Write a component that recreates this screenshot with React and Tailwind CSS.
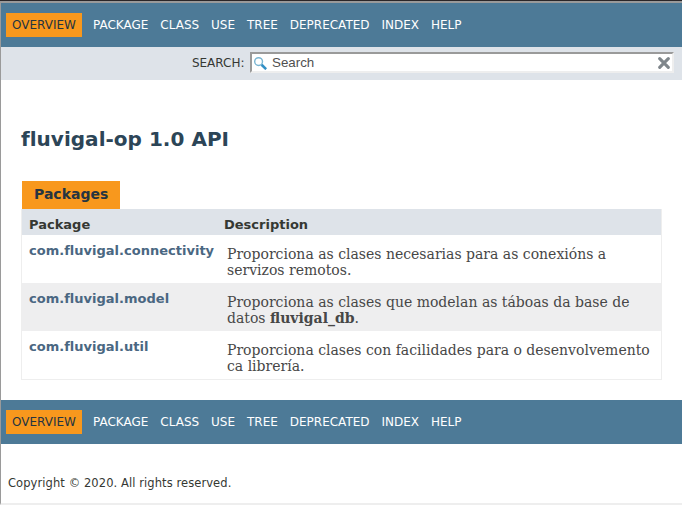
const navItems = ["PACKAGE", "CLASS", "USE", "TREE", "DEPRECATED", "INDEX", "HELP"];

const packages = [
  {
    name: "com.fluvigal.connectivity",
    description: (
      <>
        Proporciona as clases necesarias para as conexións a<br />
        servizos remotos.
      </>
    ),
  },
  {
    name: "com.fluvigal.model",
    description: (
      <>
        Proporciona as clases que modelan as táboas da base de<br />
        datos <b>fluvigal_db</b>.
      </>
    ),
  },
  {
    name: "com.fluvigal.util",
    description: (
      <>
        Proporciona clases con facilidades para o desenvolvemento<br />
        ca librería.
      </>
    ),
  },
];

function NavBar() {
  return (
    <nav className="flex h-11 shrink-0 items-center bg-[#4d7a97] pl-[5px] text-[12px] leading-[14px] text-white">
      <span className="mr-[11px] flex h-6 w-[76px] items-center bg-[#f8981d] pl-1.5 text-[#253441]">OVERVIEW</span>
      <ul className="flex gap-[11.95px]">
        {navItems.map((item) => (
          <li key={item}>{item}</li>
        ))}
      </ul>
    </nav>
  );
}

function SearchBar() {
  return (
    <div className="flex h-[33px] shrink-0 items-start justify-end bg-[#dee3e9] pt-[5px] pr-2">
      <span className="mr-[5.5px] pt-1 text-[12px] leading-[14px] text-[#353833]">SEARCH:</span>
      <div className="flex h-[21px] w-[424px] items-center border-2 border-t-[#9a9a9a] border-r-[#eeeeee] border-b-[#eeeeee] border-l-[#9a9a9a] bg-white pr-[2px] pl-[2px]">
        <svg className="mt-px h-[13px] w-[13px] shrink-0" viewBox="0 0 13 13" fill="none">
          <circle cx="4.6" cy="4.6" r="3.9" stroke="#79b5d2" strokeWidth="1.4" />
          <path d="M7.6 7.8 12.2 12.2" stroke="#3390c5" strokeWidth="2.6" />
        </svg>
        <span className="ml-[5px] flex-1 font-['Liberation_Sans',sans-serif] text-[13.333px] leading-[15px] text-[#505050]">
          Search
        </span>
        <svg className="h-3 w-3 shrink-0" viewBox="0 0 12 12" fill="none">
          <path d="M1.7 1.7 10.3 10.3M10.3 1.7 1.7 10.3" stroke="#7f868b" strokeWidth="3.1" strokeLinecap="round" />
        </svg>
      </div>
    </div>
  );
}

function PackageTable() {
  return (
    <section className="mr-5 ml-5">
      <h2 className="ml-px flex h-7 w-[98px] items-center bg-[#f8981d] pb-[2px] pl-3 text-[14px] leading-4 font-bold text-[#253441]">
        Packages
      </h2>
      <div className="border-x border-b border-[#eeeeee]">
        <div className="flex h-[26px] bg-[#dee3e9] pt-2 pl-[7px] text-[13px] leading-[15px] font-bold text-[#353833]">
          <span className="w-[195px]">Package</span>
          <span>Description</span>
        </div>
        {packages.map(({ name, description }) => (
          <div key={name} className="flex h-12 pl-[7px] odd:bg-[#eeeeef] even:bg-white">
            <a className="w-[198px] shrink-0 pt-2 text-[13px] leading-[15px] font-bold tracking-[0.01px] text-[#4a6782]">{name}</a>
            <p className="pt-[11px] font-['DejaVu_Serif',serif] text-[14px] leading-4 whitespace-nowrap text-[#474747]">
              {description}
            </p>
          </div>
        ))}
      </div>
    </section>
  );
}

export default function App() {
  return (
    <div className="h-[505px] w-[682px] overflow-hidden border-t border-[#2a2628] bg-white font-['DejaVu_Sans',sans-serif]">
      <div className="flex h-[504px] flex-col border-t-2 border-b-2 border-l border-t-[#9a9a9a] border-b-[#eeeeee] border-l-[#9a9a9a]">
        <NavBar />
        <SearchBar />
        <h1 className="mt-[47px] mb-[30px] ml-5 text-[20px] leading-6 font-bold tracking-[0.02px] text-[#2c4557]">
          fluvigal-op 1.0 API
        </h1>
        <PackageTable />
        <div className="h-5 shrink-0" />
        <NavBar />
        <p className="mt-8 ml-[7px] text-[11.5px] leading-[14px] tracking-[0.08px] text-[#353833]">
          Copyright © 2020. All rights reserved.
        </p>
      </div>
    </div>
  );
}
